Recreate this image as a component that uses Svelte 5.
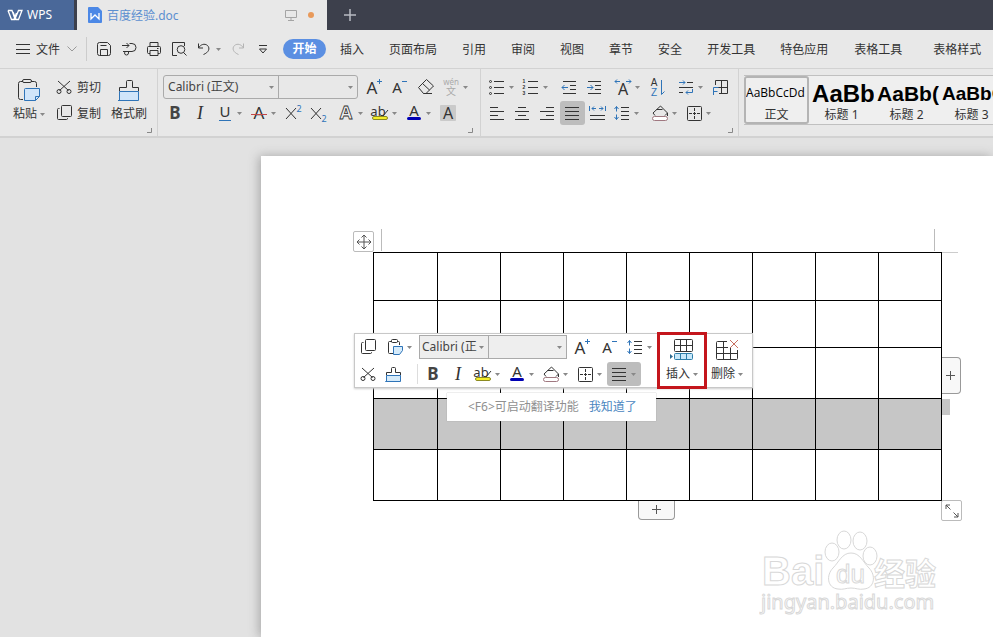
<script lang="ts">
	type Tool = { id: string; label: string; caret?: boolean; on?: boolean };

	const blue = "#2f74b8";

	// 18 x 18 glyphs
	const icons: Record<string, string> = {
		menu: `<path d="M2 4.5h14M2 9.5h14M2 13.5h14"/>`,
		save: `<path d="M4.5 2.5h8l3 3v8a2 2 0 0 1-2 2h-9a2 2 0 0 1-2-2v-9a2 2 0 0 1 2-2zM5.5 15.5v-6h7v6M5.5 5.5h6"/>`,
		output: `<path d="M2 5.5h7M6.5 3L9 5.5 6.5 8M9.5 3.5H12a4 4 0 0 1 0 8H3M8.5 11.5V13a2 2 0 0 1-4 0c0-1 1-1.5 2-1.5"/>`,
		print: `<path d="M5 6V2.5h8V6M5 13.5H3.5a1 1 0 0 1-1-1v-5a1 1 0 0 1 1-1h11a1 1 0 0 1 1 1v5a1 1 0 0 1-1 1H13M5 10.5h8v5H5zM12 8.5h1.5"/>`,
		preview: `<path d="M7 15.5H2.5v-13h12V6M13.5 12.5l3 3"/><circle cx="11" cy="9.5" r="3.8"/>`,
		undo: `<path d="M3.5 3.5V8H8M3.5 8c2-3.5 6-5 9-2.5 3 3 1 7-4 9"/>`,
		redo: `<path d="M14.5 3.5V8H10M14.5 8c-2-3.5-6-5-9-2.5-3 3-1 7 4 9" stroke="#b4b4b4"/>`,
		more: `<path d="M5 5.5h8M5.5 9L9 13l3.5-4z"/>`,
		cut: `<path d="M3 3l10.5 9.5M15 3L4.5 12.5"/><circle cx="4" cy="13.5" r="2"/><circle cx="14" cy="13.5" r="2"/>`,
		copy: `<rect x="6.5" y="1.500" width="10" height="11" rx="1"/><path d="M4.5 4.500h-1a1 1 0 0 0-1 1v9a1 1 0 0 0 1 1h8a1 1 0 0 0 1-1v-.5"/>`,
		paste: `<path d="M6 3.5H3.5a1 1 0 0 0-1 1v10a1 1 0 0 0 1 1H7M11 3.5h1.5a1 1 0 0 1 1 1V7"/><rect x="5.5" y="1.5" width="6" height="3" rx="1"/><path d="M7.5 8.5h9v4l-3 4h-6z" fill="#d6ebfa" stroke="${blue}"/>`,
		brush: `<path d="M2.5 10.500v-3h5v-4a1 1 0 0 1 1-1h2a1 1 0 0 1 1 1v4h5v3"/><path d="M2.5 10.5h14v6h-15h1z" fill="#d6ebfa" stroke="${blue}"/>`,
		grow: `<text x="8" y="16" font-size="17">A</text><path d="M15.5 1v5M13 3.5h5" stroke="${blue}"/>`,
		shrink: `<text x="8" y="15" font-size="15">A</text><path d="M13 3.5h5" stroke="${blue}"/>`,
		eraser: `<path d="M1.5 9.500L9.500 1.500l7 6.500-7.500 7.500H6.500zM5.5 5.500l7 6.500M6.5 15.500H15"/>`,
		phonetic: `<text x="9" y="7" font-size="8" fill="#aaa">wén</text><text x="9" y="17" font-size="10" fill="#aaa">文</text>`,
		bold: `<text x="9" y="15" font-size="17" font-weight="700" fill="#444">B</text>`,
		italic: `<text x="9" y="15" font-size="18" font-style="italic" font-family="Liberation Serif">I</text>`,
		underline: `<text x="9" y="13" font-size="15">U</text><path d="M3 16.5h12" stroke="${blue}"/>`,
		strike: `<text x="9" y="15" font-size="17">A</text><path d="M1 10.5h16" stroke="#c44848"/>`,
		sup: `<path d="M2 4l10 11M12 4L2 15"/><text x="15" y="8" font-size="9" fill="${blue}">2</text>`,
		sub: `<path d="M2 4l10 11M12 4L2 15"/><text x="15" y="18" font-size="9" fill="${blue}">2</text>`,
		effect: `<text x="9" y="15" font-size="18" font-weight="700" fill="#eee" stroke="#333" stroke-width="0.8">A</text>`,
		marker: `<text x="7" y="12" font-size="13">ab</text><path d="M12 12l5-6"/><rect x="1.5" y="12.5" width="15" height="3" rx="1.5" fill="#f5ee28" stroke="#8c8a20"/>`,
		color: `<text x="9" y="12" font-size="15">A</text><rect x="2" y="13" width="14" height="3" rx="1.5" fill="#0000b4" stroke="none"/>`,
		shade: `<rect x="1" y="1" width="16" height="16" rx="1" fill="#cacaca" stroke="none"/><text x="9" y="15" font-size="16">A</text>`,
		bullets: `<path d="M6 3.5h10M6 9.5h10M6 15.5h10"/><circle cx="2.5" cy="3.5" r="1"/><circle cx="2.5" cy="9.5" r="1"/><circle cx="2.5" cy="15.5" r="1"/>`,
		numbers: `<path d="M6 3.5h10M6 9.5h10M6 15.5h10"/><g font-size="5" font-weight="700" font-family="Liberation Sans"><text x="2" y="5">1</text><text x="2" y="11">2</text><text x="2" y="17">3</text></g>`,
		outdent: `<path d="M3 3.5h13M10 7.5h6M10 11.5h6M3 15.5h13"/><path d="M2 9.5h6M4.5 7L2 9.5 4.5 12" stroke="${blue}"/>`,
		indent: `<path d="M3 3.5h13M10 7.5h6M10 11.5h6M3 15.5h13"/><path d="M2 9.5h6M5.5 7L8 9.5 5.5 12" stroke="${blue}"/>`,
		scale: `<text x="9" y="17" font-size="16">A</text><path d="M1 3.5h5M3 1.5l-2 2 2 2M12 3.5h5M15 1.5l2 2-2 2" stroke="${blue}"/>`,
		sort: `<g font-size="10" font-family="Liberation Sans"><text x="6" y="8">A</text><text x="6" y="18" fill="${blue}">Z</text></g><path d="M13.5 2v14.5l3-3" stroke="${blue}"/>`,
		tabs: `<path d="M10 4.5h6M2 9.5h14M2 14.5h4"/><path d="M2 4.5h6M6 2.5l2 2-2 2M15.5 11v3.5H9M11 12.5l-2 2 2 2" stroke="${blue}"/>`,
		frame: `<path d="M4.5 7V2.5h12v13H8M10.5 2.5v13M7 9.5h9.5"/><path d="M2.5 17V9.500h5M2.5 13.500h4" stroke="${blue}"/>`,
		left: `<path d="M2 3.5h8M2 7.5h14M2 11.5h8M2 15.5h14"/>`,
		center: `<path d="M5 3.5h8M2 7.5h14M5 11.5h8M2 15.5h14"/>`,
		right: `<path d="M8 3.5h8M2 7.5h14M8 11.5h8M2 15.5h14"/>`,
		justify: `<path d="M2 3.5h14M2 7.5h14M2 11.5h14M2 15.5h14"/>`,
		spread: `<path d="M2 11.5h15M2 15.5h15"/><path d="M1.5 2v5M17.5 2v5M4 4.5h4M6 2.5l-2 2 2 2M11 4.5h4M13 2.5l2 2-2 2" stroke="${blue}"/>`,
		spacing: `<path d="M8 3.5h8M8 7.5h8M8 11.5h8M8 15.5h8"/><path d="M3.5 2.5v5M1.5 5l2-2.5 2 2.5M3.5 10.5v5M1.5 13l2 2.5 2-2.5" stroke="${blue}"/>`,
		fill: `<path d="M4 11.5L2 9l7.500-7 7 7-2.500 2.500M5.5 5.500h6M16.5 9v3"/><rect x="1.5" y="12.5" width="15" height="4" rx="2" fill="#fff" stroke="#a07880"/>`,
		border: `<rect x="2.5" y="2.5" width="14" height="14" rx="1"/><path d="M9.5 4v11M4 9.5h11" stroke-dasharray="3 1"/>`,
	};

	// 24 x 24 glyphs
	const big: Record<string, string> = {
		paste: `<path d="M6 3.5H3.5a2 2 0 0 0-2 2v14a2 2 0 0 0 2 2H6M14 3.5h3.5a2 2 0 0 1 2 2V9"/><rect x="5.5" y="1.5" width="9" height="3" rx="1.5"/><path d="M7.5 11.5a1 1 0 0 1 1-1h14v8l-4 4h-11z" fill="#d0e5fa" stroke="${blue}"/><path d="M18.5 22.5v-4h4" stroke="${blue}"/>`,
		brush: `<path d="M2.5 13.5v-4h7v-6a1 1 0 0 1 1-1h4a1 1 0 0 1 1 1v6h6v4"/><path d="M2.5 13.5h19v9H1h1.5z" fill="#d0e5fa" stroke="${blue}"/>`,
		insert: `<rect x="4.5" y="2.5" width="18" height="12" rx="1"/><path d="M10.5 2.5v12M16.5 2.5v12M4.5 8.5h18"/><rect x="4.5" y="16.5" width="18" height="6" rx="1" fill="#c8e8fa" stroke="#2d7da8"/><path d="M10.5 16.5v6M16.5 16.5v6" stroke="#2d7da8"/><path d="M0 17l3 2.5L0 22z" fill="#2d6a90" stroke="none"/>`,
		remove: `<path d="M12 4.5H2.500a1 1 0 0 0-1 1v16a1 1 0 0 0 1 1h19a1 1 0 0 0 1-1V13M1.500 10.5H13M1.500 16.5h21M8.5 4.5v18M15.5 11v11.5"/><path d="M15 3l8 8M23 3l-8 8" stroke="#c87060"/>`,
	};

	const quick: Tool[] = [
		{ id: "save", label: "保存" },
		{ id: "output", label: "输出" },
		{ id: "print", label: "打印" },
		{ id: "preview", label: "打印预览" },
		{ id: "undo", label: "撤销", caret: true },
		{ id: "redo", label: "恢复" },
		{ id: "more", label: "更多" },
	];
	const tabs = ["插入", "页面布局", "引用", "审阅", "视图", "章节", "安全", "开发工具", "特色应用"];
	const tableTabs = ["表格工具", "表格样式"];

	const fontTop: Tool[][] = [
		[{ id: "grow", label: "增大字号" }, { id: "shrink", label: "减小字号" }],
		[{ id: "eraser", label: "清除格式" }, { id: "phonetic", label: "拼音指南", caret: true }],
	];
	const fontBottom: Tool[][] = [
		[
			{ id: "bold", label: "加粗" },
			{ id: "italic", label: "倾斜" },
			{ id: "underline", label: "下划线", caret: true },
			{ id: "strike", label: "删除线", caret: true },
			{ id: "sup", label: "上标" },
			{ id: "sub", label: "下标" },
		],
		[
			{ id: "effect", label: "文字效果", caret: true },
			{ id: "marker", label: "突出显示", caret: true },
			{ id: "color", label: "字体颜色", caret: true },
			{ id: "shade", label: "字符底纹" },
		],
	];
	const paraTop: Tool[][] = [
		[{ id: "bullets", label: "项目符号", caret: true }, { id: "numbers", label: "编号", caret: true }],
		[{ id: "outdent", label: "减少缩进" }, { id: "indent", label: "增加缩进" }],
		[{ id: "scale", label: "中文版式", caret: true }, { id: "sort", label: "排序" }],
		[{ id: "tabs", label: "制表位", caret: true }, { id: "frame", label: "插入框" }],
	];
	const paraBottom: Tool[][] = [
		[
			{ id: "left", label: "左对齐" },
			{ id: "center", label: "居中对齐" },
			{ id: "right", label: "右对齐" },
			{ id: "justify", label: "两端对齐", on: true },
			{ id: "spread", label: "分散对齐" },
			{ id: "spacing", label: "行距", caret: true },
		],
		[{ id: "fill", label: "底纹颜色", caret: true }, { id: "border", label: "边框", caret: true }],
	];
	const miniTop: Tool[] = [
		{ id: "grow", label: "增大字号" },
		{ id: "shrink", label: "减小字号" },
		{ id: "spacing", label: "行距", caret: true },
	];
	const miniBottom: Tool[] = [
		{ id: "bold", label: "加粗" },
		{ id: "italic", label: "倾斜" },
		{ id: "marker", label: "突出显示", caret: true },
		{ id: "color", label: "字体颜色", caret: true },
		{ id: "fill", label: "底纹颜色", caret: true },
		{ id: "border", label: "边框", caret: true },
		{ id: "justify", label: "两端对齐", caret: true, on: true },
	];

	const styles = [
		{ sample: "AaBbCcDd", name: "正文", cls: "body" },
		{ sample: "AaBb", name: "标题 1", cls: "h1" },
		{ sample: "AaBb(", name: "标题 2", cls: "h2" },
		{ sample: "AaBbC", name: "标题 3", cls: "h3" },
	];

	const rows = ["r48", "r47", "r51", "r51 selected", "r51"];
	const cols = Array(9).fill("");
</script>

{#snippet icon(id: string)}
	<svg class="icon" width="18" height="18" viewBox="0 0 18 18" aria-hidden="true">{@html icons[id]}</svg>
{/snippet}

{#snippet bigIcon(id: string)}
	<svg class="icon" width="24" height="24" viewBox="0 0 24 24" aria-hidden="true">{@html big[id]}</svg>
{/snippet}

{#snippet caret()}
	<svg class="caret" width="5" height="3" viewBox="0 0 5 3" aria-hidden="true"><path d="M0 0h5L2.5 3z" /></svg>
{/snippet}

{#snippet tool(t: Tool)}
	<button class="tool" class:wide={t.caret} class:on={t.on} aria-label={t.label}>
		{@render icon(t.id)}
		{#if t.caret}{@render caret()}{/if}
	</button>
{/snippet}

{#snippet sets(list: Tool[][])}
	{#each list as set}
		<div class="set">
			{#each set as t}{@render tool(t)}{/each}
		</div>
	{/each}
{/snippet}

{#snippet fontPicker()}
	<div class="picker">
		<span class="drop name">
			<select aria-label="字体"><option>Calibri (正文)</option></select>
			{@render caret()}
		</span>
		<span class="drop size">
			<select aria-label="字号"><option></option></select>
			{@render caret()}
		</span>
	</div>
{/snippet}

{#snippet launcher()}
	<button class="launcher" aria-label="更多设置">
		<svg width="5" height="5" viewBox="0 0 5 5"><path d="M0 4.5h4.5V0" fill="none" stroke="#888" /></svg>
	</button>
{/snippet}

<div class="app">
	<header class="titlebar">
		<button class="wps">
			<svg width="16" height="12" viewBox="0 0 16 12" aria-hidden="true">
				<path d="M1 1.5h4l3 8.5 3.5-8.5H15L11.5 10.5H9L6 3M1 1.5l3.5 9H7L9.5 4" fill="none" stroke="#fff" stroke-width="1.3" />
			</svg>
			WPS
		</button>
		<div class="doc">
			<svg width="14" height="16" viewBox="0 0 14 16" aria-hidden="true">
				<path d="M1 0h9l4 4v11a1 1 0 0 1-1 1H1a1 1 0 0 1-1-1V1a1 1 0 0 1 1-1z" fill="#4c88e6" />
				<path d="M3 6v6l4-4 4 4V6" fill="none" stroke="#fff" stroke-width="1.3" />
			</svg>
			<span class="title">百度经验.doc</span>
			<svg width="12" height="12" viewBox="0 0 12 12" aria-hidden="true">
				<path d="M.5 1.5h11v7H.5zM6 8.5v3M3 11.5h6" fill="none" stroke="#a4a4a4" />
			</svg>
			<span class="dot"></span>
		</div>
		<button class="add" aria-label="新建">
			<svg width="12" height="12" viewBox="0 0 12 12"><path d="M6 0v12M0 6h12" stroke="#b8bac2" stroke-width="1.5" /></svg>
		</button>
	</header>

	<div class="menubar">
		<button class="file">
			{@render icon("menu")}
			<span>文件</span>
			<svg width="10" height="6" viewBox="0 0 10 6" aria-hidden="true"><path d="M.5.5L5 5 9.5.5" fill="none" stroke="#999" /></svg>
		</button>
		<div class="quick">
			{#each quick as t}{@render tool(t)}{/each}
		</div>
		<nav class="tabs">
			<button class="current">开始</button>
			{#each tabs as t}<button>{t}</button>{/each}
		</nav>
		<nav class="tabs context">
			{#each tableTabs as t}<button>{t}</button>{/each}
		</nav>
	</div>

	<div class="ribbon">
		<section class="group clipboard">
			<div class="row tall">
				<button class="large">{@render bigIcon("paste")}<span>粘贴{@render caret()}</span></button>
				<div class="stack">
					<button class="small">{@render icon("cut")}<span>剪切</span></button>
					<button class="small">{@render icon("copy")}<span>复制</span></button>
				</div>
				<button class="large">{@render bigIcon("brush")}<span>格式刷</span></button>
			</div>
			{@render launcher()}
		</section>
		<section class="group font">
			<div class="row">{@render fontPicker()}{@render sets(fontTop)}</div>
			<div class="row">{@render sets(fontBottom)}</div>
			{@render launcher()}
		</section>
		<section class="group para">
			<div class="row">{@render sets(paraTop)}</div>
			<div class="row">{@render sets(paraBottom)}</div>
			{@render launcher()}
		</section>
		<div class="gallery">
			{#each styles as s, i}
				<button class="style" class:picked={i === 0}>
					<span class="sample {s.cls}">{s.sample}</span>
					<span>{s.name}</span>
				</button>
			{/each}
		</div>
	</div>

	<main class="desk">
		<div class="page">
			<div class="sheet">
				<table>
					<tbody>
						{#each rows as r}
							<tr class={r}>
								{#each cols as c}<td>{c}</td>{/each}
							</tr>
						{/each}
					</tbody>
				</table>

				<i class="mark start"></i>
				<i class="mark end"></i>
				<i class="edge"></i>
				<i class="tail"></i>
				<button class="handle move" aria-label="移动表格">
					<svg width="16" height="16" viewBox="0 0 16 16"><path d="M8 1v14M1 8h14M5.5 3.5L8 1l2.5 2.5M5.5 12.5L8 15l2.5-2.5M3.5 5.5L1 8l2.5 2.5M12.5 5.5L15 8l-2.5 2.5" /></svg>
				</button>
				<button class="handle addcol" aria-label="添加列">
					<svg width="10" height="10" viewBox="0 0 10 10"><path d="M4.5 0v9M0 4.5h9" /></svg>
				</button>
				<button class="handle addrow" aria-label="添加行">
					<svg width="10" height="10" viewBox="0 0 10 10"><path d="M4.5 0v9M0 4.5h9" /></svg>
				</button>
				<button class="handle resize" aria-label="调整大小">
					<svg width="16" height="16" viewBox="0 0 16 16"><path d="M2 6V2h4M2 2l4.5 4.5M14 10v4h-4M14 14L9.5 9.5" /></svg>
				</button>

				<div class="mini">
					<div class="minirows">
						<div class="minirow top">
							{@render tool({ id: "copy", label: "复制" })}
							{@render tool({ id: "paste", label: "粘贴", caret: true })}
							{@render fontPicker()}
							{#each miniTop as t}{@render tool(t)}{/each}
						</div>
						<div class="minirow">
							{@render tool({ id: "cut", label: "剪切" })}
							{@render tool({ id: "brush", label: "格式刷" })}
							<i class="sep"></i>
							{#each miniBottom as t}{@render tool(t)}{/each}
						</div>
					</div>
					<button class="large action ringed">{@render bigIcon("insert")}<span>插入{@render caret()}</span></button>
					<button class="large action">{@render bigIcon("remove")}<span>删除{@render caret()}</span></button>
				</div>

				<div class="tip">
					<span>&lt;F6&gt;可启动翻译功能</span>
					<a href="#ok">我知道了</a>
				</div>
			</div>

			<svg class="watermark" width="184" height="90" viewBox="0 0 184 90">
				<g fill="#fff" stroke="#d8d8d8">
					<text x="3" y="59" font-size="40" font-weight="700">Bai</text>
					<ellipse cx="73" cy="26" rx="7" ry="9" />
					<ellipse cx="85" cy="14" rx="7" ry="9" />
					<ellipse cx="101" cy="15" rx="7" ry="9" />
					<ellipse cx="111" cy="30" rx="7" ry="9" />
					<path d="M92 27c9 0 12 9 18 15 7 7 6 20-5 21-5 1-8-1-13-1s-8 2-13 1c-11-1-12-14-5-21 6-6 9-15 18-15z" />
					<text x="77" y="57" font-size="26">du</text>
					<text class="cjk" x="115" y="59" font-size="31" font-weight="700">经验</text>
					<text class="url" x="2" y="83" font-size="20">jingyan.baidu.com</text>
				</g>
			</svg>
		</div>
	</main>
</div>

<style>
	:global(body) {
		margin: 0;
		background: #e2e2e2;
	}
	.app {
		display: flex;
		flex-direction: column;
		height: 100vh;
		overflow: hidden;
		font: 12px/18px "Noto Sans", "Noto Sans CJK SC", sans-serif;
		color: #333;
	}
	button {
		display: flex;
		align-items: center;
		padding: 0;
		border: 0;
		background: none;
		font: inherit;
		color: inherit;
		white-space: nowrap;
		flex: none;
	}
	svg {
		flex: none;
		display: block;
	}
	.icon {
		fill: none;
		stroke: #333;
		overflow: visible;
	}
	.icon :global(text) {
		text-anchor: middle;
	}
	.icon :global(text:not([fill])) {
		fill: #333;
	}
	.icon :global(text:not([stroke])) {
		stroke: none;
	}
	.caret {
		fill: #888;
	}

	.titlebar {
		display: flex;
		flex: none;
		height: 30px;
		background: #3d404c;
	}
	.wps {
		width: 74px;
		margin-right: 3px;
		padding-left: 7px;
		gap: 4px;
		background: #4a6899;
		color: #fff;
	}
	.doc {
		display: flex;
		align-items: center;
		box-sizing: border-box;
		width: 250px;
		padding: 0 13px 0 11px;
		gap: 5px;
		background: #e8e8e8;
		color: #5c8fd0;
	}
	.title {
		flex: 1;
		padding-top: 2px;
	}
	.dot {
		width: 6px;
		height: 6px;
		margin-left: 6px;
		border-radius: 50%;
		background: #e8995a;
	}
	.add {
		padding: 0 17px;
	}

	.menubar {
		display: flex;
		align-items: center;
		flex: none;
		height: 38px;
		border-bottom: 1px solid #d2d2d2;
		background: #e8e8e8;
	}
	.file {
		height: 24px;
		padding: 0 9px 0 14px;
		gap: 4px;
		border-right: 1px solid #ccc;
	}
	.file span,
	.small span,
	.tabs button {
		padding-top: 2px;
	}
	.file svg:last-child {
		margin-left: 3px;
	}
	.quick {
		display: flex;
		width: 191px;
		margin-left: 5px;
	}
	.tabs {
		display: flex;
		gap: 25px;
	}
	.tabs .current {
		justify-content: center;
		width: 43px;
		height: 20px;
		margin-right: -11px;
		padding-top: 0;
		border-radius: 10px;
		background: #5b8fe2;
		color: #fff;
		font-weight: 700;
	}
	.context {
		gap: 31px;
		margin-left: 26px;
	}

	.ribbon {
		display: flex;
		flex: none;
		height: 67px;
		border-bottom: 2px solid #d2d2d2;
		background: #e8e8e8;
		overflow: hidden;
	}
	.group {
		display: flex;
		flex-direction: column;
		flex: none;
		padding: 5px 7px 0 5px;
		border-right: 1px solid #d2d2d2;
	}
	.clipboard {
		padding-right: 5px;
		padding-left: 13px;
	}
	.para {
		padding-right: 5px;
		padding-left: 4px;
	}
	.row {
		display: flex;
		align-items: center;
		height: 26px;
		gap: 3px;
	}
	.para .row {
		gap: 4px;
	}
	.tall {
		height: 52px;
		gap: 10px;
		padding-right: 5px;
	}
	.set {
		display: flex;
	}
	.tool {
		width: 25px;
		height: 24px;
		padding-left: 3px;
		gap: 3px;
		box-sizing: border-box;
	}
	.tool.wide {
		width: 34px;
	}
	.tool.on {
		border-radius: 3px;
		background: #bdbdbd;
	}
	.launcher {
		align-self: flex-end;
		margin-top: 2px;
	}
	.large {
		flex-direction: column;
		height: 52px;
		padding-top: 4px;
		gap: 3px;
		box-sizing: border-box;
	}
	.large span {
		display: flex;
		align-items: center;
		gap: 3px;
	}
	.small {
		height: 26px;
		gap: 4px;
	}

	.picker {
		display: flex;
		box-sizing: border-box;
		width: 195px;
		height: 24px;
		border: 1px solid #aaa;
		border-radius: 3px;
	}
	.drop {
		display: grid;
		align-items: center;
		flex: 1;
		min-width: 0;
	}
	.drop > * {
		grid-area: 1 / 1;
	}
	.drop .caret {
		justify-self: end;
		margin-right: 4px;
		pointer-events: none;
	}
	.drop.name {
		flex: none;
		width: 114px;
		border-right: 1px solid #aaa;
	}
	select {
		appearance: none;
		width: 100%;
		height: 22px;
		min-width: 0;
		padding: 0 11px 0 4px;
		border: 0;
		background: transparent;
		font: inherit;
		color: #444;
	}

	.gallery {
		display: flex;
		flex: 1;
		min-width: 0;
		height: 48px;
		margin: 6px 0 0 5px;
		border: solid #c0c0c0;
		border-width: 1px 0;
		background: #efefef;
		overflow: hidden;
	}
	.style {
		flex-direction: column;
		width: 65px;
		box-sizing: border-box;
		overflow: hidden;
	}
	.picked {
		border: 2px solid #b4b4b4;
		border-radius: 3px;
	}
	.sample {
		align-self: flex-start;
		height: 30px;
		padding-left: 3px;
		font-family: "Liberation Sans", sans-serif;
		font-weight: 700;
		line-height: 36px;
		color: #000;
	}
	.sample.body {
		height: 28px;
		padding-left: 0;
		font-family: "Open Sans", sans-serif;
		font-weight: 400;
		line-height: 30px;
	}
	.sample.h1 {
		font-size: 24px;
	}
	.sample.h2 {
		font-size: 21px;
	}
	.sample.h3 {
		font-size: 19px;
	}

	.desk {
		display: flex;
		flex: 1;
		min-height: 0;
		padding: 18px 0 0 261px;
		background: #e2e2e2;
	}
	.page {
		position: relative;
		flex: 1;
		padding: 96px 51px 0 112px;
		background: #fff;
		box-shadow: -2px 0 10px #a8a8a8;
	}
	.sheet {
		position: relative;
	}
	table {
		width: 100%;
		border-collapse: collapse;
		table-layout: fixed;
	}
	td {
		padding: 0;
		border: 1px solid #000;
	}
	td:first-child {
		width: 63px;
	}
	.r47 {
		height: 47px;
	}
	.r48 {
		height: 48px;
	}
	.r51 {
		height: 51px;
	}
	.selected {
		background: #c6c6c6;
	}

	.mark {
		position: absolute;
		top: -23px;
		height: 22px;
		border-left: 1px solid #bbb;
	}
	.start {
		left: 8px;
	}
	.end {
		right: 7px;
	}
	.edge {
		position: absolute;
		top: 0;
		left: 100%;
		width: 16px;
		border-top: 1px solid #ccc;
	}
	.tail {
		position: absolute;
		top: 147px;
		left: 100%;
		width: 8px;
		height: 16px;
		background: #c6c6c6;
	}
	.handle {
		position: absolute;
		justify-content: center;
		box-sizing: border-box;
		width: 21px;
		height: 21px;
		border: 1px solid #bbb;
		border-radius: 2px;
		background: #fff;
	}
	.handle path {
		fill: none;
		stroke: #555;
	}
	.move {
		top: -21px;
		left: -20px;
	}
	.resize {
		right: -20px;
		bottom: -20px;
	}
	.addcol {
		top: 105px;
		left: 100%;
		width: 19px;
		height: 37px;
		border-color: #999;
		border-left: 0;
		border-radius: 0 4px 4px 0;
		background: #f8f8f8;
	}
	.addrow {
		top: 100%;
		left: 265px;
		width: 37px;
		height: 19px;
		border-color: #999;
		border-top: 0;
		border-radius: 0 0 4px 4px;
		background: #f8f8f8;
	}

	.mini {
		position: absolute;
		top: 81px;
		left: -19px;
		display: flex;
		box-sizing: border-box;
		width: 399px;
		height: 55px;
		border: 1px solid #c8c8c8;
		background: #fff;
		box-shadow: 0 1px 2px #ccc;
	}
	.minirows {
		box-sizing: border-box;
		width: 305px;
		padding-left: 1px;
	}
	.minirow {
		display: flex;
		align-items: center;
		height: 28px;
	}
	.top {
		height: 26px;
		gap: 2px;
	}
	.mini .picker {
		width: 148px;
		border-radius: 0;
		background: #eee;
	}
	.mini .name {
		width: 68px;
	}
	.mini select {
		padding-left: 2px;
	}
	.sep {
		height: 20px;
		margin: 0 3px 0 11px;
		border-left: 1px solid #ddd;
	}
	.action {
		width: 44px;
		height: 51px;
		margin: 1px 1px 1px 0;
		padding-top: 2px;
		gap: 4px;
	}
	.ringed {
		outline: 3px solid #c4161c;
	}

	.tip {
		position: absolute;
		top: 141px;
		left: 74px;
		display: flex;
		align-items: center;
		box-sizing: border-box;
		height: 28px;
		padding: 0 19px 0 21px;
		gap: 10px;
		background: #fff;
		box-shadow: 0 0 1px #999;
		color: #909090;
		white-space: nowrap;
	}
	.tip a {
		color: #4a86c0;
		text-decoration: none;
	}

	.watermark {
		position: absolute;
		top: 370px;
		right: 50px;
		font-family: "Liberation Sans", sans-serif;
	}
	.watermark .cjk {
		font-family: "Noto Sans CJK SC", sans-serif;
	}
	.watermark .url {
		font-family: "Noto Sans", sans-serif;
	}
</style>
